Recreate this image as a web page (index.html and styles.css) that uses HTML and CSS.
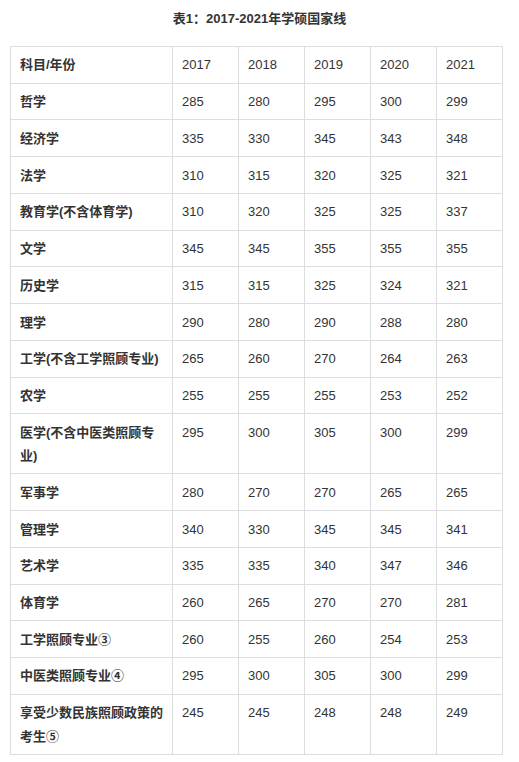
FILE: index.html
```html
<!DOCTYPE html>
<html lang="zh">
<head>
<meta charset="utf-8">
<title>表1：2017-2021年学硕国家线</title>
<link rel="stylesheet" href="styles.css">
</head>
<body>
<div class="page">
  <h1 class="title">表1：2017-2021年学硕国家线</h1>
  <table class="scores">
    <colgroup>
      <col class="c-subject">
      <col class="c-year"><col class="c-year"><col class="c-year"><col class="c-year"><col class="c-year">
    </colgroup>
    <tbody>
      <tr><td class="subj">科目/年份</td><td>2017</td><td>2018</td><td>2019</td><td>2020</td><td>2021</td></tr>
      <tr><td class="subj">哲学</td><td>285</td><td>280</td><td>295</td><td>300</td><td>299</td></tr>
      <tr><td class="subj">经济学</td><td>335</td><td>330</td><td>345</td><td>343</td><td>348</td></tr>
      <tr><td class="subj">法学</td><td>310</td><td>315</td><td>320</td><td>325</td><td>321</td></tr>
      <tr><td class="subj">教育学(不含体育学)</td><td>310</td><td>320</td><td>325</td><td>325</td><td>337</td></tr>
      <tr><td class="subj">文学</td><td>345</td><td>345</td><td>355</td><td>355</td><td>355</td></tr>
      <tr><td class="subj">历史学</td><td>315</td><td>315</td><td>325</td><td>324</td><td>321</td></tr>
      <tr><td class="subj">理学</td><td>290</td><td>280</td><td>290</td><td>288</td><td>280</td></tr>
      <tr><td class="subj">工学(不含工学照顾专业)</td><td>265</td><td>260</td><td>270</td><td>264</td><td>263</td></tr>
      <tr><td class="subj">农学</td><td>255</td><td>255</td><td>255</td><td>253</td><td>252</td></tr>
      <tr><td class="subj">医学(不含中医类照顾专业)</td><td>295</td><td>300</td><td>305</td><td>300</td><td>299</td></tr>
      <tr><td class="subj">军事学</td><td>280</td><td>270</td><td>270</td><td>265</td><td>265</td></tr>
      <tr><td class="subj">管理学</td><td>340</td><td>330</td><td>345</td><td>345</td><td>341</td></tr>
      <tr><td class="subj">艺术学</td><td>335</td><td>335</td><td>340</td><td>347</td><td>346</td></tr>
      <tr><td class="subj">体育学</td><td>260</td><td>265</td><td>270</td><td>270</td><td>281</td></tr>
      <tr><td class="subj">工学照顾专业③</td><td>260</td><td>255</td><td>260</td><td>254</td><td>253</td></tr>
      <tr><td class="subj">中医类照顾专业④</td><td>295</td><td>300</td><td>305</td><td>300</td><td>299</td></tr>
      <tr><td class="subj">享受少数民族照顾政策的考生⑤</td><td>245</td><td>245</td><td>248</td><td>248</td><td>249</td></tr>
    </tbody>
  </table>
</div>
</body>
</html>
```
FILE: styles.css
```css
html, body {
  margin: 0;
  padding: 0;
  background: #ffffff;
}

body {
  font-family: "Liberation Sans", "Noto Sans CJK SC", sans-serif;
  font-size: 13px;
  color: #333333;
}

.page {
  padding: 0 10px;
}

.title {
  margin: 0 0 8px;
  height: 38px;
  line-height: 38px;
  font-size: 13px;
  font-weight: bold;
  text-align: center;
  color: #333333;
}

.scores {
  width: 492px;
  border-collapse: collapse;
  table-layout: fixed;
}

.c-subject { width: 162px; }
.c-year { width: 66px; }

.scores td {
  border: 1px solid #dddddd;
  padding: 6.4px 8px 6px 9px;
  line-height: 23.35px;
  vertical-align: top;
  text-align: left;
}

.scores td.subj {
  font-weight: bold;
}
```
